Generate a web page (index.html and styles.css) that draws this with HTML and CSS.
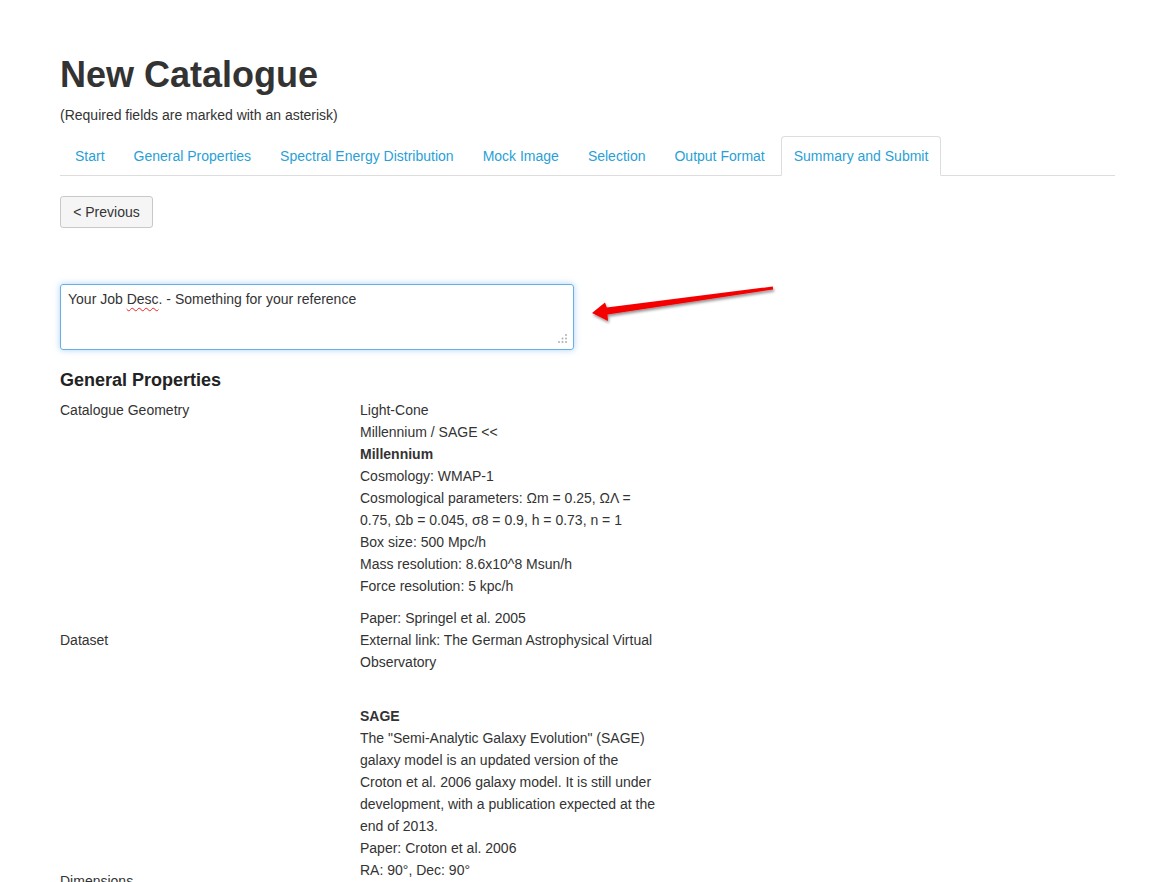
FILE: index.html
```html
<!DOCTYPE html>
<html>
<head>
<meta charset="utf-8">
<title>New Catalogue</title>
<link rel="stylesheet" href="styles.css">
</head>
<body>
<div class="page">
  <h1 class="title">New Catalogue</h1>
  <p class="subtitle">(Required fields are marked with an asterisk)</p>
  <ul class="tabs">
    <li><a href="#">Start</a></li>
    <li><a href="#">General Properties</a></li>
    <li><a href="#">Spectral Energy Distribution</a></li>
    <li><a href="#">Mock Image</a></li>
    <li><a href="#">Selection</a></li>
    <li><a href="#">Output Format</a></li>
    <li class="active"><a href="#">Summary and Submit</a></li>
  </ul>
  <div class="actions"><button class="btn">&lt; Previous</button></div>
  <div class="desc-row">
    <div class="textbox" role="textbox">Your Job <span class="misspelt">Desc</span>. - Something for your reference
      <svg class="grip" width="12" height="12" viewBox="0 0 12 12"><circle cx="10" cy="2" r="1"/><circle cx="6.5" cy="5.5" r="1"/><circle cx="10" cy="5.5" r="1"/><circle cx="3" cy="9" r="1"/><circle cx="6.5" cy="9" r="1"/><circle cx="10" cy="9" r="1"/></svg>
    </div>
  </div>
  <h2 class="section">General Properties</h2>
  <div class="props">
    <div class="label top">Catalogue Geometry</div>
    <div class="value">
      <div>Light-Cone</div>
      <div>Millennium / SAGE &lt;&lt;</div>
      <div><b>Millennium</b></div>
      <div>Cosmology: WMAP-1</div>
      <div>Cosmological parameters: Ωm = 0.25, ΩΛ = 0.75, Ωb = 0.045, σ8 = 0.9, h = 0.73, n = 1</div>
      <div>Box size: 500 Mpc/h</div>
      <div>Mass resolution: 8.6x10^8 Msun/h</div>
      <div>Force resolution: 5 kpc/h</div>
    </div>
    <div class="label gap">Dataset</div>
    <div class="value gap">
      <div>Paper: Springel et al. 2005</div>
      <div>External link: The German Astrophysical Virtual Observatory</div>
    </div>
    <div class="label gap"></div>
    <div class="value gap">
      <div>&nbsp;</div>
      <div><b>SAGE</b></div>
      <div>The "Semi-Analytic Galaxy Evolution" (SAGE) galaxy model is an updated version of the Croton et al. 2006 galaxy model. It is still under development, with a publication expected at the end of 2013.</div>
      <div>Paper: Croton et al. 2006</div>
    </div>
    <div class="label">Dimensions</div>
    <div class="value">
      <div>RA: 90°, Dec: 90°</div>
      <div>Redshift: 0 - 0.5</div>
    </div>
  </div>
</div>
<svg class="arrow" width="1175" height="882" viewBox="0 0 1175 882">
  <defs>
    <filter id="sh" x="-10%" y="-50%" width="120%" height="200%">
      <feGaussianBlur in="SourceAlpha" stdDeviation="1.5"/>
      <feOffset dx="1" dy="2" result="b"/>
      <feComponentTransfer><feFuncA type="linear" slope="0.45"/></feComponentTransfer>
      <feMerge><feMergeNode/><feMergeNode in="SourceGraphic"/></feMerge>
    </filter>
  </defs>
  <polygon filter="url(#sh)" fill="#f40000" points="592,313 608,321 607.5,314.5 773.2,289.5 772.8,286.5 606.8,307.5 605,302.5"/>
</svg>
</body>
</html>
```
FILE: styles.css
```css
html, body {
  margin: 0;
  padding: 0;
  background: #fff;
}
body {
  font-family: "Liberation Sans", Arial, sans-serif;
  font-size: 14px;
  color: #333;
  line-height: 20px;
}
.page {
  width: 1055px;
  padding: 55px 0 0 60px;
}
.title {
  margin: 0;
  font-size: 36px;
  line-height: 40px;
  font-weight: bold;
  color: #333;
}
.subtitle {
  margin: 10px 0 0;
  line-height: 20px;
}
.tabs {
  list-style: none;
  margin: 11px 0 0;
  padding: 0 0 0 2px;
  display: flex;
  border-bottom: 1px solid #ddd;
  height: 39px;
}
.tabs li {
  margin: 0 3px -1px 0;
}
.tabs a {
  display: block;
  padding: 9px 12px;
  line-height: 20px;
  border: 1px solid transparent;
  border-radius: 4px 4px 0 0;
  color: #2a9fd6;
  text-decoration: none;
}
.tabs li.active a {
  border-color: #ddd;
  border-bottom-color: #fff;
  background: #fff;
}
.actions {
  margin-top: 20px;
}
.btn {
  font-family: "Liberation Sans", Arial, sans-serif;
  font-size: 14px;
  color: #333;
  line-height: 20px;
  padding: 5px 12px;
  background: #f5f5f5;
  border: 1px solid #c8c8c8;
  border-radius: 3px;
  width: 93px;
  height: 32px;
}
.desc-row {
  margin-top: 56px;
}
.textbox {
  position: relative;
  box-sizing: border-box;
  width: 514px;
  height: 66px;
  padding: 4px 7px;
  border: 1px solid #66afe9;
  border-radius: 3px;
  box-shadow: 0 0 6px rgba(102, 175, 233, 0.55);
  line-height: 20px;
  color: #333;
}
.misspelt {
  text-decoration: underline wavy #e22;
  text-decoration-thickness: 1px;
  text-underline-offset: 3px;
}
.grip {
  position: absolute;
  right: 5px;
  bottom: 4px;
  fill: #b0b0b0;
}
.section {
  margin: 19px 0 0;
  font-size: 18px;
  line-height: 22px;
  font-weight: bold;
  color: #222;
}
.props {
  margin-top: 8px;
  display: grid;
  grid-template-columns: 300px 300px;
  align-items: center;
  line-height: 22px;
}
.label.top {
  align-self: start;
}
.gap {
  margin-top: 10px;
}
.arrow {
  position: absolute;
  left: 0;
  top: 0;
  pointer-events: none;
}
```
